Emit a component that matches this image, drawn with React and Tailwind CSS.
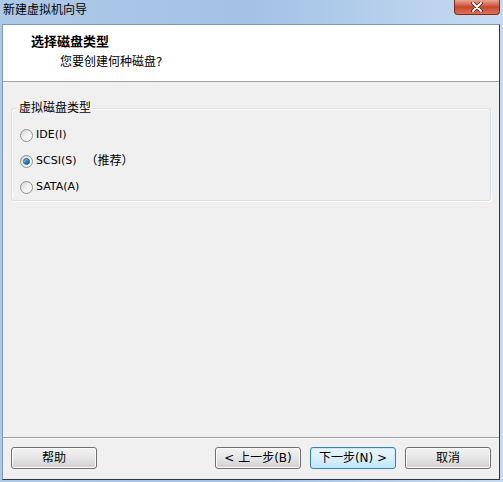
import { useState } from "react";

const font = { fontFamily: '"DejaVu Sans", "Noto Sans CJK SC", sans-serif' };

const options = [
  { id: "ide", label: "IDE(I)" },
  { id: "scsi", label: "SCSI(S)", note: "（推荐）" },
  { id: "sata", label: "SATA(A)" },
];

const Radio = ({ checked }) => (
  <span className="relative flex h-[13px] w-[13px] items-center justify-center rounded-full border border-[#8f8f8f] bg-gradient-to-br from-[#d4d4d4] via-[#f2f2f2] to-[#ffffff]">
    {checked && (
      <span className="h-[7px] w-[7px] rounded-full border border-[#1b5d8a] bg-gradient-to-br from-[#9fd6f4] via-[#2c8ac8] to-[#0f4f86]" />
    )}
  </span>
);

const Button = ({ children, primary, className = "" }) => (
  <button
    className={`h-[22px] w-[86px] rounded-[3px] border text-[12px] text-black ${
      primary
        ? "border-[#3c7fb1] bg-gradient-to-b from-[#eaf6fd] via-[#d9f0fc] to-[#bee6fd] shadow-[inset_0_0_0_1px_#c6e9fc]"
        : "border-[#707070] bg-gradient-to-b from-[#f2f2f2] via-[#e6e6e6] to-[#d0d0d0] shadow-[inset_0_0_0_1px_#fcfcfc]"
    } ${className}`}
  >
    {children}
  </button>
);

export default function App() {
  const [disk, setDisk] = useState("scsi");

  return (
    <div
      className="flex h-[482px] w-[503px] flex-col bg-gradient-to-r from-[#adc9e8] via-[#a3c2e6] to-[#c6dbf1] text-[12px] text-black"
      style={font}
    >
      {/* title bar */}
      <div className="relative flex h-[24px] shrink-0 items-start pl-[3px] pt-[3px]">
        <span className="text-[12px] leading-[14px] text-black">新建虚拟机向导</span>
        <div className="absolute right-[3px] top-0 flex h-[15px] w-[46px] items-center justify-center rounded-b-[4px] border border-t-0 border-[#7a2a1f] bg-gradient-to-b from-[#e8a493] via-[#c9462c] to-[#d8735a]">
          <svg width="12" height="10" viewBox="0 0 12 10">
            <path d="M2 1 L10 9 M10 1 L2 9" stroke="#3d1c16" strokeWidth="3.4" strokeLinecap="round" />
            <path d="M2 1 L10 9 M10 1 L2 9" stroke="#ffffff" strokeWidth="2" strokeLinecap="round" />
          </svg>
        </div>
      </div>

      {/* client area */}
      <div className="mb-[2px] ml-[2px] mr-[3px] flex flex-1 flex-col border border-l-[#8399b3] border-r-[#2f3640] border-b-[#2f3640] border-t-[#8399b3] bg-[#f0f0f0]">
        <div className="h-[57px] shrink-0 border-b border-b-[#a0a0a0] bg-white pl-[28px] pt-[9px]">
          <div className="text-[13px] font-bold leading-[16px]">选择磁盘类型</div>
          <div className="pl-[29px] pt-[5px] leading-[14px]">您要创建何种磁盘?</div>
        </div>

        <div className="flex-1 px-[8px] pt-[26px]">
          <div className="relative h-[93px] rounded-[3px] border border-[#d5dfe5] shadow-[1px_1px_0_#ffffff,inset_1px_1px_0_#ffffff]">
            <span className="absolute -top-[8px] left-[5px] bg-[#f0f0f0] px-[2px] leading-[14px]">
              虚拟磁盘类型
            </span>
            <div className="flex flex-col gap-[12px] pl-[8px] pt-[19px]">
              {options.map((o) => (
                <label
                  key={o.id}
                  className="flex h-[14px] items-center gap-[3px] leading-[14px]"
                  onClick={() => setDisk(o.id)}
                >
                  <Radio checked={disk === o.id} />
                  <span className="text-[11px]">{o.label}</span>
                  {o.note && <span className="pl-[6px]">{o.note}</span>}
                </label>
              ))}
            </div>
          </div>
        </div>

        <div className="flex h-[42px] shrink-0 items-start border-t border-t-[#a0a0a0] px-[8px] pt-[9px] shadow-[inset_0_1px_0_#ffffff]">
          <Button>帮助</Button>
          <div className="ml-auto flex">
            <Button>&lt; 上一步(B)</Button>
            <Button primary className="ml-[9px]">
              下一步(N) &gt;
            </Button>
            <Button className="ml-[9px]">取消</Button>
          </div>
        </div>
      </div>
    </div>
  );
}
